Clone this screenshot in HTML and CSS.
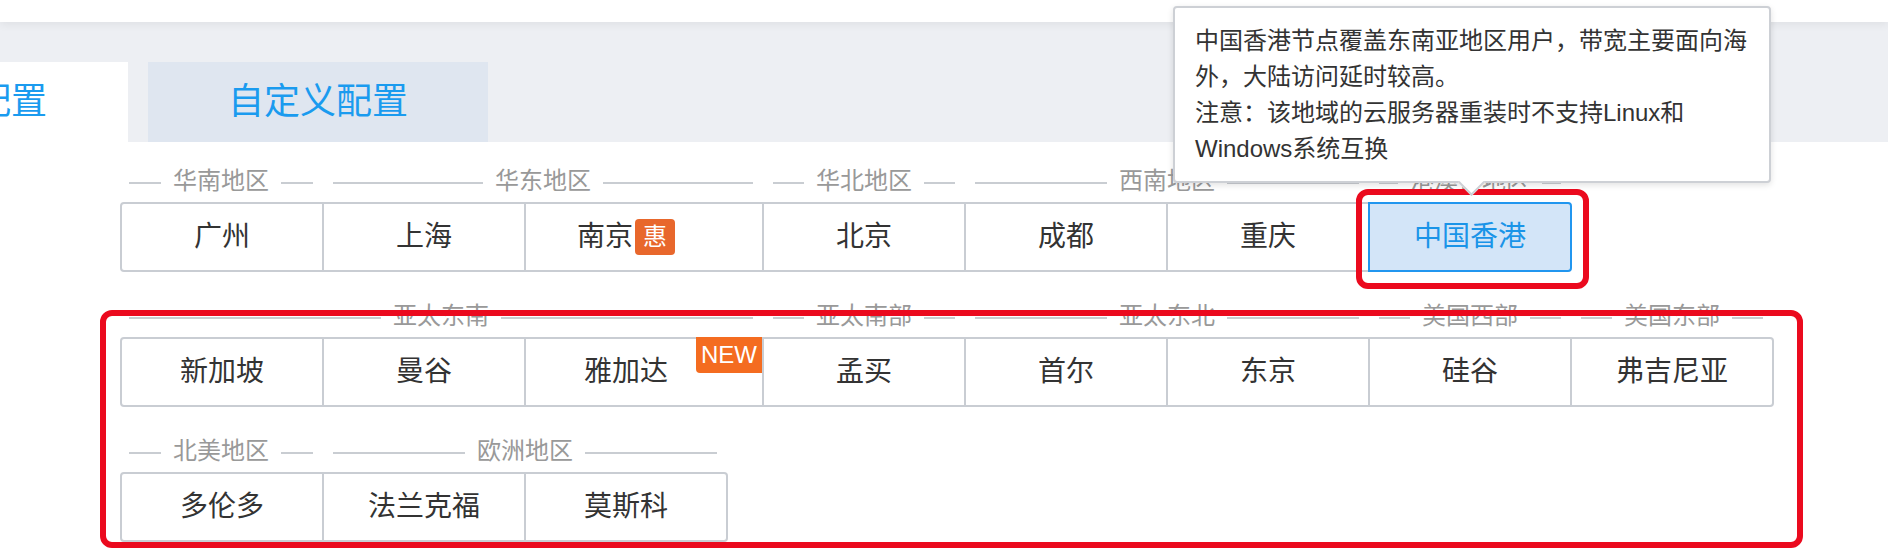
FILE: index.html
```html
<!DOCTYPE html>
<html lang="zh-CN">
<head>
<meta charset="utf-8">
<title>地域选择</title>
<link rel="stylesheet" href="styles.css">
</head>
<body>
<div class="topbar"></div>
<div class="tabs">
  <div class="tab tab-quick">快速配置</div>
  <div class="tab tab-custom">自定义配置</div>
</div>

<div class="regions">
  <div class="region-row">
    <div class="group"><div class="label">华南地区</div><div class="cells"><div class="cell">广州</div></div></div>
    <div class="group"><div class="label">华东地区</div><div class="cells"><div class="cell">上海</div><div class="cell wide">南京<span class="hui">惠</span></div></div></div>
    <div class="group"><div class="label">华北地区</div><div class="cells"><div class="cell">北京</div></div></div>
    <div class="group"><div class="label">西南地区</div><div class="cells"><div class="cell">成都</div><div class="cell">重庆</div></div></div>
    <div class="group"><div class="label">港澳台地区</div><div class="cells"><div class="cell selected">中国香港</div></div></div>
  </div>
  <div class="region-row">
    <div class="group"><div class="label">亚太东南</div><div class="cells"><div class="cell">新加坡</div><div class="cell">曼谷</div><div class="cell wide">雅加达<span class="new">NEW</span></div></div></div>
    <div class="group"><div class="label">亚太南部</div><div class="cells"><div class="cell">孟买</div></div></div>
    <div class="group"><div class="label">亚太东北</div><div class="cells"><div class="cell">首尔</div><div class="cell">东京</div></div></div>
    <div class="group"><div class="label">美国西部</div><div class="cells"><div class="cell">硅谷</div></div></div>
    <div class="group"><div class="label">美国东部</div><div class="cells"><div class="cell">弗吉尼亚</div></div></div>
  </div>
  <div class="region-row">
    <div class="group"><div class="label">北美地区</div><div class="cells"><div class="cell">多伦多</div></div></div>
    <div class="group"><div class="label">欧洲地区</div><div class="cells"><div class="cell">法兰克福</div><div class="cell">莫斯科</div></div></div>
  </div>
</div>

<div class="tooltip">
  <p>中国香港节点覆盖东南亚地区用户，带宽主要面向海外，大陆访问延时较高。</p>
  <p>注意：该地域的云服务器重装时不支持Linux和Windows系统互换</p>
  <span class="arrow"></span>
</div>

<div class="mark mark-hk"></div>
<div class="mark mark-intl"></div>
</body>
</html>
```

FILE: styles.css
```css
html, body {
  margin: 0;
  padding: 0;
}
body {
  width: 1888px;
  height: 560px;
  overflow: hidden;
  position: relative;
  background: #ffffff;
  font-family: "Liberation Sans", "Noto Sans CJK SC", sans-serif;
}

.topbar {
  height: 22px;
  background: #ffffff;
  position: relative;
  z-index: 1;
  box-shadow: 0 3px 8px rgba(0, 0, 0, 0.06);
}

.tabs {
  height: 120px;
  background: #edeff3;
  display: flex;
  align-items: flex-end;
  gap: 20px;
}
.tab {
  height: 80px;
  line-height: 80px;
  text-align: center;
  font-size: 36px;
  color: #1a9bef;
  white-space: nowrap;
}
.tab-quick {
  width: 306px;
  margin-left: -178px;
  background: #ffffff;
}
.tab-custom {
  width: 340px;
  background: #dfe6f0;
}

.regions {
  padding: 24px 0 0 120px;
}
.region-row {
  display: flex;
  margin-bottom: 29px;
}
.group {
  display: flex;
  flex-direction: column;
}
.label {
  display: flex;
  align-items: center;
  gap: 12px;
  height: 30px;
  margin: 0 11px 6px 9px;
  font-size: 24px;
  line-height: 30px;
  color: #999999;
  white-space: nowrap;
}
.label::before,
.label::after {
  content: "";
  flex: 1;
  height: 2px;
  margin-top: 4px;
  background: #c9cdd2;
}
.cells {
  display: flex;
}
.cell {
  box-sizing: border-box;
  width: 202px;
  height: 70px;
  border: 2px solid #c9cdd3;
  border-left: none;
  display: flex;
  align-items: center;
  justify-content: center;
  font-size: 28px;
  line-height: 36px;
  color: #333333;
  background: #ffffff;
  position: relative;
  white-space: nowrap;
}
.region-row > .group:first-child .cell:first-child {
  width: 204px;
  border-left: 2px solid #c9cdd3;
  border-radius: 4px 0 0 4px;
}
.region-row > .group:last-child .cell:last-child {
  border-radius: 0 4px 4px 0;
}
.cell.wide {
  width: 238px;
  padding-right: 36px;
}
.region-row > .group .cell.selected {
  width: 204px;
  margin-left: -2px;
  border: 2px solid #2196ef;
  border-radius: 4px;
  background: #d3e5f8;
  color: #1a94e8;
}

.hui {
  display: inline-block;
  width: 40px;
  height: 36px;
  line-height: 36px;
  margin-left: 2px;
  font-size: 24px;
  text-align: center;
  color: #ffffff;
  background: #e8672c;
  border-radius: 4px;
}
.new {
  position: absolute;
  top: -2px;
  right: 0;
  width: 66px;
  height: 36px;
  line-height: 36px;
  font-size: 24px;
  text-align: center;
  color: #ffffff;
  background: #f46c20;
  border-radius: 0 0 0 4px;
}

.tooltip {
  position: absolute;
  left: 1173px;
  top: 6px;
  width: 554px;
  padding: 15px 20px 14px;
  border: 2px solid #cdd0d5;
  border-radius: 4px;
  background: #ffffff;
  box-shadow: 0 2px 6px rgba(0, 0, 0, 0.12);
  font-size: 24px;
  line-height: 36px;
  color: #333333;
  z-index: 5;
}
.tooltip p {
  margin: 0;
}
.arrow {
  position: absolute;
  box-sizing: border-box;
  left: 287px;
  bottom: -11px;
  width: 19px;
  height: 19px;
  background: #ffffff;
  border-right: 2px solid #cdd0d5;
  border-bottom: 2px solid #cdd0d5;
  transform: rotate(45deg);
}

.mark {
  position: absolute;
  box-sizing: border-box;
  border: 6px solid #eb0a1e;
  border-radius: 12px;
  z-index: 4;
}
.mark-hk {
  left: 1356px;
  top: 189px;
  width: 233px;
  height: 100px;
}
.mark-intl {
  left: 100px;
  top: 310px;
  width: 1703px;
  height: 238px;
}
```
